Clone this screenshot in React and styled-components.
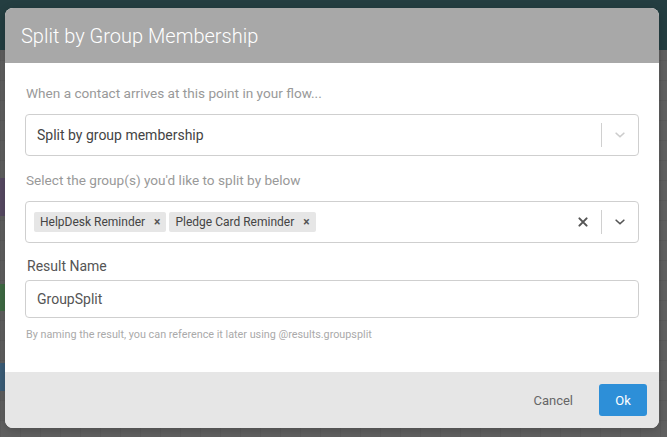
import React from "react";
import styled, { createGlobalStyle } from "styled-components";

const GlobalStyle = createGlobalStyle`
  html, body {
    margin: 0;
    padding: 0;
  }
  body {
    font-family: Roboto, "Liberation Sans", sans-serif;
    background: #5f5f5f;
  }
`;

const Page = styled.div`
  position: relative;
  width: 667px;
  height: 437px;
  overflow: hidden;
  background-color: #606060;
  background-image: linear-gradient(rgba(0, 0, 0, 0.05) 1px, transparent 1px),
    linear-gradient(90deg, rgba(0, 0, 0, 0.05) 1px, transparent 1px);
  background-size: 20px 20px;
`;

const TopBar = styled.div`
  height: 50px;
  background: #243e41;
`;

const Node = styled.div`
  position: absolute;
  left: 0;
  width: 20px;
  top: ${(p) => p.top}px;
  height: ${(p) => p.h}px;
  background: ${(p) => p.color};
`;

const Overlay = styled.div`
  position: absolute;
  inset: 0;
  display: flex;
  justify-content: flex-start;
  align-items: flex-start;
  padding: 8px 0 0 5px;
`;

const Dialog = styled.div`
  width: 654px;
  border-radius: 8px;
  overflow: hidden;
  background: #fff;
  display: flex;
  flex-direction: column;
  box-shadow: 0 2px 10px rgba(0, 0, 0, 0.2);
`;

const Header = styled.div`
  height: 55px;
  background: #a8a8a8;
  color: #fff;
  font-size: 20px;
  font-weight: 300;
  display: flex;
  align-items: center;
  padding-left: 16px;
  padding-top: 1px;
  box-sizing: border-box;
`;

const Body = styled.div`
  padding: 21px 20px 0 20px;
  height: 309px;
  box-sizing: border-box;
  display: flex;
  flex-direction: column;
`;

const Prompt = styled.div`
  margin-top: ${(p) => p.mt || 0}px;
  font-size: 13.6px;
  color: #999;
  margin-left: 1px;
  line-height: 18px;
`;

const SelectBox = styled.div`
  margin-top: 12px;
  height: 42px;
  box-sizing: border-box;
  border: 1px solid #cfcfcf;
  border-radius: 4px;
  display: flex;
  align-items: center;
  padding-left: ${(p) => (p.multi ? 8 : 11)}px;
`;

const Value = styled.div`
  flex: 1;
  font-size: 14px;
  color: #444;
`;

const Tags = styled.div`
  flex: 1;
  display: flex;
  gap: 3px;
`;

const Tag = styled.div`
  background: #e6e6e6;
  border-radius: 2px;
  height: 20px;
  display: flex;
  align-items: center;
  padding: 0 6px;
  font-size: 12px;
  color: #444;
  gap: 9px;
`;

const TagX = styled.span`
  font-size: 12px;
  color: #555;
  font-weight: 700;
`;

const Indicators = styled.div`
  display: flex;
  align-items: center;
  height: 100%;
`;

const IconSlot = styled.div`
  width: 36px;
  display: flex;
  align-items: center;
  justify-content: center;
`;

const Sep = styled.div`
  width: 1px;
  height: 24px;
  background: #d0d0d0;
`;

const Label = styled.div`
  margin-top: 14px;
  margin-left: 2px;
  font-size: 14px;
  color: #555;
  line-height: 18px;
`;

const Input = styled.div`
  margin-top: 5px;
  height: 38px;
  box-sizing: border-box;
  border: 1px solid #cfcfcf;
  border-radius: 4px;
  display: flex;
  align-items: center;
  padding-left: 11px;
  font-size: 14px;
  color: #555;
`;

const Help = styled.div`
  margin-top: 10px;
  margin-left: 1px;
  font-size: 10.8px;
  color: #aaa;
`;

const Footer = styled.div`
  height: 56px;
  background: #e6e6e6;
  display: flex;
  align-items: center;
  justify-content: flex-end;
  padding-right: 12px;
  gap: 26px;
`;

const CancelButton = styled.button`
  border: none;
  background: transparent;
  font-family: inherit;
  font-size: 13px;
  color: #666;
  padding: 0;
`;

const OkButton = styled.button`
  border: none;
  width: 48px;
  height: 32px;
  border-radius: 3px;
  background: #2d8fd8;
  color: #fff;
  font-family: inherit;
  font-size: 13px;
  padding: 0;
`;

const Chevron = ({ color }) => (
  <svg width="14" height="14" viewBox="0 0 20 20">
    <path
      d="M4.5 7.5 L10 12.5 L15.5 7.5"
      fill="none"
      stroke={color}
      strokeWidth="2.4"
      strokeLinecap="round"
      strokeLinejoin="round"
    />
  </svg>
);

const Cross = () => (
  <svg width="12" height="12" viewBox="0 0 20 20">
    <path
      d="M4 4 L16 16 M16 4 L4 16"
      fill="none"
      stroke="#555"
      strokeWidth="3.4"
      strokeLinecap="round"
    />
  </svg>
);

const groups = ["HelpDesk Reminder", "Pledge Card Reminder"];

export default function App() {
  return (
    <>
      <GlobalStyle />
      <Page>
        <TopBar />
        <Node top={178} h={38} color="#574a63" />
        <Node top={284} h={27} color="#3f6b44" />
        <Node top={363} h={28} color="#3b5d78" />
        <Overlay>
          <Dialog>
            <Header>Split by Group Membership</Header>
            <Body>
              <Prompt>When a contact arrives at this point in your flow...</Prompt>
              <SelectBox>
                <Value>Split by group membership</Value>
                <Indicators>
                  <Sep />
                  <IconSlot>
                    <Chevron color="#cccccc" />
                  </IconSlot>
                </Indicators>
              </SelectBox>
              <Prompt mt={15}>
                Select the group(s) you'd like to split by below
              </Prompt>
              <SelectBox multi>
                <Tags>
                  {groups.map((g) => (
                    <Tag key={g}>
                      {g}
                      <TagX>×</TagX>
                    </Tag>
                  ))}
                </Tags>
                <Indicators>
                  <IconSlot>
                    <Cross />
                  </IconSlot>
                  <Sep />
                  <IconSlot>
                    <Chevron color="#555555" />
                  </IconSlot>
                </Indicators>
              </SelectBox>
              <Label>Result Name</Label>
              <Input>GroupSplit</Input>
              <Help>
                By naming the result, you can reference it later using
                @results.groupsplit
              </Help>
            </Body>
            <Footer>
              <CancelButton>Cancel</CancelButton>
              <OkButton>Ok</OkButton>
            </Footer>
          </Dialog>
        </Overlay>
      </Page>
    </>
  );
}
